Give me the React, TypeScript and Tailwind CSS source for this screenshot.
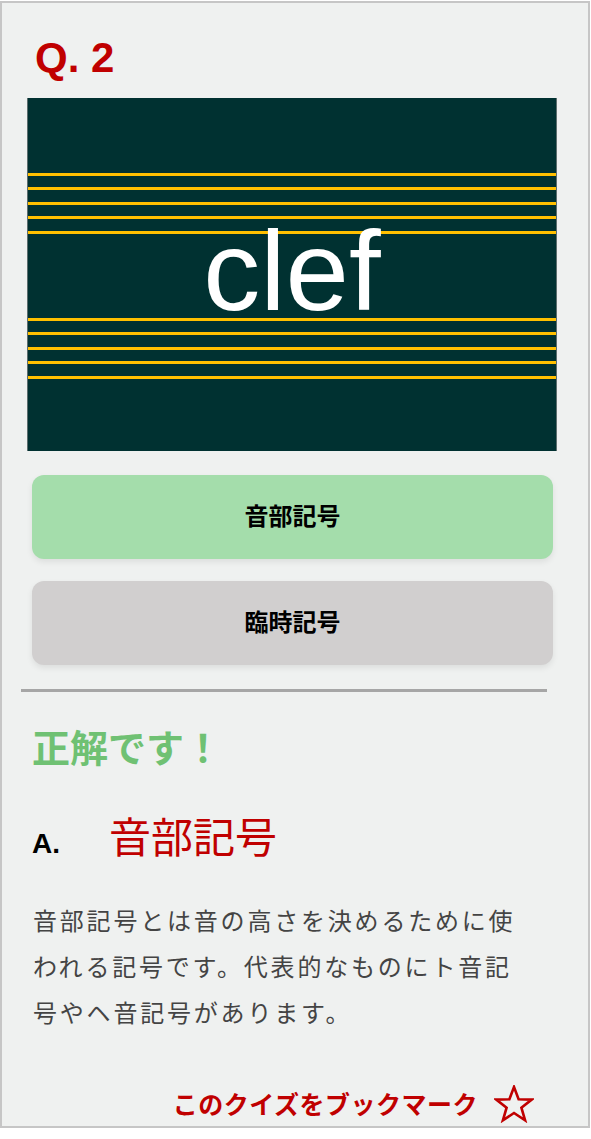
import React from "react";

const latin = "font-['Liberation_Sans',Arial,sans-serif]";
const jp = "font-['Noto_Sans_CJK_JP','Noto_Sans',sans-serif]";

const lineGaps = ["", "mt-[11px]", "mt-[12px]", "mt-[11px]", "mt-[12px]"];

function Staff() {
  return (
    <div className="flex flex-col">
      {lineGaps.map((g, i) => (
        <div key={i} className={`h-[3px] bg-[#ffc000] ${g}`} />
      ))}
    </div>
  );
}

function Star() {
  return (
    <svg width="40" height="38" viewBox="0 0 40 38" fill="none">
      <polygon
        points="20,2 24.6,14.3 37.7,14.6 27.4,22.7 31.1,35.3 20,28 8.9,35.3 12.6,22.7 2.3,14.6 15.4,14.3"
        stroke="#c00000"
        strokeWidth="2.6"
        strokeLinejoin="miter"
      />
    </svg>
  );
}

export default function App() {
  return (
    <div className="min-h-screen bg-white pt-[1px]">
      <div className="w-[590px] h-[1127px] border-2 border-[#c6c6c6] bg-[#eff1f0]">
        {/* Question number */}
        <h1
          className={`${latin} mt-[31px] pl-[33px] text-[42px] leading-[48px] font-bold text-[#c00000]`}
        >
          Q. 2
        </h1>

        {/* Question image */}
        <div className="mt-[16px] ml-[25px] w-[530px] h-[353px] grid bg-[#003131] border-x border-[#5d6e6e]">
          <div className="col-start-1 row-start-1 flex flex-col pt-[75px]">
            <Staff />
            <div className="h-[84px]" />
            <Staff />
          </div>
          <div
            className={`${latin} col-start-1 row-start-1 flex items-center justify-center pb-[8px] text-[114px] leading-none text-white`}
          >
            clef
          </div>
        </div>

        {/* Choices */}
        <div className={`${jp} ml-[30px] w-[521px] mt-[24px] flex flex-col gap-[22px]`}>
          <button className="h-[84px] pb-[4px] rounded-[12px] bg-[#a4ddab] shadow-[0_3px_6px_rgba(0,0,0,0.08)] text-[24px] font-bold text-black">
            音部記号
          </button>
          <button className="h-[84px] pb-[4px] rounded-[12px] bg-[#d1cfcf] shadow-[0_3px_6px_rgba(0,0,0,0.08)] text-[24px] font-bold text-black">
            臨時記号
          </button>
        </div>

        <div className="mt-[24px] ml-[19px] w-[526px] h-[3px] bg-[#a6a6a6]" />

        {/* Result */}
        <p className={`${jp} mt-[35px] ml-[30px] text-[38px] leading-none font-bold text-[#6fc173]`}>
          正解です！
        </p>

        <div className="mt-[49px] ml-[30px] flex items-baseline gap-[49px]">
          <span className={`${latin} text-[28px] font-bold text-black`}>A.</span>
          <span className={`${jp} text-[42px] leading-none text-[#c00000]`}>音部記号</span>
        </div>

        <p
          className={`${jp} mt-[32px] ml-[31px] w-[500px] text-[24px] leading-[46px] tracking-[2.8px] text-[#444444]`}
        >
          音部記号とは音の高さを決めるために使われる記号です。代表的なものにト音記号やヘ音記号があります。
        </p>

        <div className="mt-[50px] pr-[54px] flex items-center justify-end gap-[16px]">
          <span className={`${jp} text-[25px] tracking-[0.5px] font-bold text-[#c00000]`}>
            このクイズをブックマーク
          </span>
          <Star />
        </div>
      </div>
    </div>
  );
}
